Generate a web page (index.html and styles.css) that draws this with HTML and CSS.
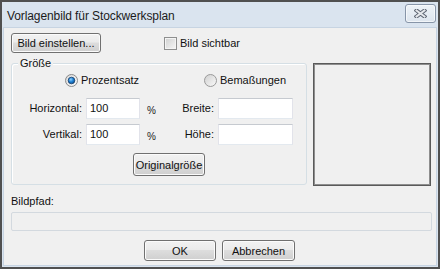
FILE: index.html
```html
<!DOCTYPE html>
<html lang="de">
<head>
<meta charset="utf-8">
<title>Vorlagenbild für Stockwerksplan</title>
<link rel="stylesheet" href="styles.css">
</head>
<body>
<div class="window">
  <div class="titlebar">
    <span class="title">Vorlagenbild für Stockwerksplan</span>
    <button class="close" aria-label="Schließen">
      <svg width="13" height="9" viewBox="0 0 13 9">
        <path d="M2.5 1.5 L10.5 7.5 M10.5 1.5 L2.5 7.5" stroke="#5a6270" stroke-width="4" stroke-linecap="square" fill="none"/>
        <path d="M2.5 1.5 L10.5 7.5 M10.5 1.5 L2.5 7.5" stroke="#e4e7eb" stroke-width="2" stroke-linecap="square" fill="none"/>
      </svg>
    </button>
  </div>
  <div class="client">
    <div class="row-top">
      <button class="btn btn-set">Bild einstellen...</button>
      <label class="check"><span class="box"></span><span>Bild sichtbar</span></label>
    </div>
    <div class="row-mid">
      <div class="group">
        <span class="group-title">Größe</span>
        <div class="radios">
          <label class="radio r1">
            <svg width="13" height="13" viewBox="0 0 13 13">
              <defs>
                <linearGradient id="rg1" x1="0" y1="0" x2="1" y2="1"><stop offset="0" stop-color="#d6d6d6"/><stop offset="1" stop-color="#fbfbfb"/></linearGradient>
                <radialGradient id="dot" cx="0.4" cy="0.35" r="0.7"><stop offset="0" stop-color="#8fd0ff"/><stop offset="0.5" stop-color="#1f83d6"/><stop offset="1" stop-color="#0c4c8c"/></radialGradient>
              </defs>
              <circle cx="6.5" cy="6.5" r="6" fill="url(#rg1)" stroke="#8a8a8a"/>
              <circle cx="6.5" cy="6.5" r="3.3" fill="url(#dot)" stroke="#163e6a" stroke-width="0.8"/>
            </svg>
            <span>Prozentsatz</span>
          </label>
          <label class="radio">
            <svg width="13" height="13" viewBox="0 0 13 13">
              <defs>
                <linearGradient id="rg2" x1="0" y1="0" x2="1" y2="1"><stop offset="0" stop-color="#cfcfcf"/><stop offset="1" stop-color="#fbfbfb"/></linearGradient>
              </defs>
              <circle cx="6.5" cy="6.5" r="6" fill="url(#rg2)" stroke="#9a9a9a"/>
            </svg>
            <span>Bemaßungen</span>
          </label>
        </div>
        <div class="fields">
          <span class="lbl">Horizontal:</span>
          <span class="input">100</span>
          <span class="pct">%</span>
          <span class="lbl">Breite:</span>
          <span class="input"></span>
          <span class="lbl">Vertikal:</span>
          <span class="input">100</span>
          <span class="pct">%</span>
          <span class="lbl">Höhe:</span>
          <span class="input"></span>
        </div>
        <button class="btn btn-orig">Originalgröße</button>
      </div>
      <div class="preview"></div>
    </div>
    <div class="path-label">Bildpfad:</div>
    <div class="path"></div>
    <div class="actions">
      <button class="btn btn-ok">OK</button>
      <button class="btn btn-cancel">Abbrechen</button>
    </div>
  </div>
</div>
</body>
</html>
```
FILE: styles.css
```css
* { box-sizing: border-box; }
html, body { margin: 0; padding: 0; background: #ffffff; }
body { font-family: "Liberation Sans", Arial, sans-serif; font-size: 11px; color: #111; }

.window {
  width: 440px;
  height: 269px;
  border: 2px solid #505050;
  background: #dae4ef;
  display: flex;
  flex-direction: column;
}

.titlebar {
  height: 25px;
  display: flex;
  align-items: flex-start;
  justify-content: space-between;
  padding: 2px 2px 0 5px;
}
.title {
  font-size: 12px;
  line-height: 16px;
  margin-top: 4px;
  color: #1b1b1b;
  letter-spacing: -0.1px;
}
.close {
  width: 31px;
  height: 19px;
  padding: 0;
  border: 1px solid #8795a8;
  border-radius: 3px;
  background: linear-gradient(#eef3f8, #dde5ee);
  box-shadow: inset 0 0 0 1px rgba(255,255,255,0.6);
  display: flex;
  align-items: center;
  justify-content: center;
}

.client {
  flex: 1;
  margin: 0 1px 1px 1px;
  border: 1px solid #c7d4e2;
  background: #f0f0f0;
  padding: 5px 5px 0 7px;
  display: flex;
  flex-direction: column;
}

.btn {
  font-family: "Liberation Sans", Arial, sans-serif;
  font-size: 11px;
  color: #111;
  padding: 0;
  border: 1px solid #707070;
  border-radius: 3px;
  background: linear-gradient(#f2f2f2 0%, #ebebeb 45%, #dddddd 50%, #cfcfcf 100%);
  box-shadow: inset 0 0 0 1px #fbfbfb;
  text-align: center;
}

.row-top {
  height: 20px;
  display: flex;
  align-items: center;
}
.btn-set { width: 90px; height: 20px; }
.check {
  display: flex;
  align-items: center;
  margin-left: 63px;
  gap: 3px;
  line-height: 13px;
}
.box {
  width: 13px;
  height: 13px;
  border: 1px solid #8e8f8f;
  background: linear-gradient(135deg, #cfd0d0, #f7f7f7);
  box-shadow: inset 0 0 0 1px #f4f4f4;
}

.row-mid {
  display: flex;
  align-items: flex-start;
  margin-top: 10px;
}
.group {
  position: relative;
  width: 296px;
  border: 1px solid #d5dfe5;
  border-radius: 3px;
  box-shadow: inset 1px 1px 0 #ffffff;
  padding: 10px 0 8px 0;
  display: flex;
  flex-direction: column;
}
.group-title {
  position: absolute;
  top: -7px;
  left: 6px;
  padding: 0 2px;
  line-height: 13px;
  background: #f0f0f0;
}
.radios {
  display: flex;
  height: 13px;
  padding-left: 53px;
}
.radio {
  display: flex;
  align-items: center;
  gap: 3px;
  line-height: 13px;
}
.r1 { width: 139px; }

.fields {
  display: grid;
  grid-template-columns: 74px 54px 20px 58px 75px;
  grid-auto-rows: 21px;
  row-gap: 5px;
  margin-top: 11px;
}
.lbl {
  text-align: right;
  padding-right: 4px;
  line-height: 21px;
}
.input {
  background: #ffffff;
  border: 1px solid;
  border-color: #c6cad0 #e2e3ea #e3e9ef #e2e3ea;
  padding-left: 3px;
  line-height: 19px;
  font-size: 11px;
}
.pct {
  padding-left: 7px;
  padding-top: 6px;
  font-size: 10px;
  line-height: 13px;
  color: #222;
}
.btn-orig {
  width: 72px;
  height: 23px;
  margin-top: 8px;
  margin-left: 121px;
}

.preview {
  width: 118px;
  height: 123px;
  margin-left: 6px;
  border: 1px solid #5a5a5a;
  box-shadow: inset 0 0 0 1px #8e8e8e;
  background: #f0f0f0;
}

.path-label {
  margin-top: 9px;
  line-height: 13px;
}
.path {
  height: 19px;
  margin-top: 4px;
  margin-right: -1px;
  border: 1px solid #d3d9df;
  border-radius: 2px;
  background: #f0f0f0;
}

.actions {
  display: flex;
  justify-content: center;
  gap: 6px;
  margin-top: 9px;
  margin-left: -3px;
}
.btn-ok { width: 72px; height: 21px; }
.btn-cancel { width: 73px; height: 21px; }
```
